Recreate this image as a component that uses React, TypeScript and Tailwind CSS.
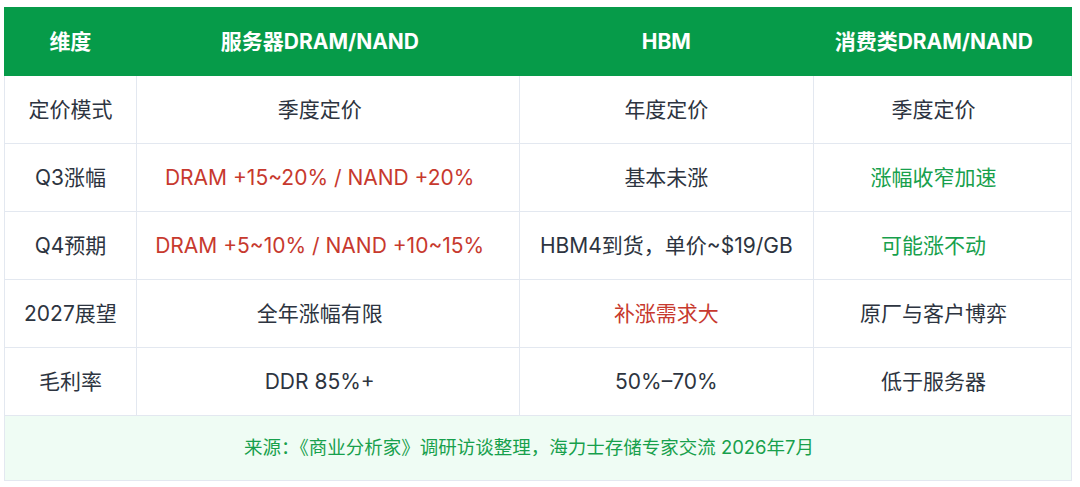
import React from "react";

const RED = "text-[#c7392e]";
const GREEN = "text-[#17a04c]";
const DARK = "text-[#2d3440]";

type Cell = { t: string; c?: string };

const rows: Cell[][] = [
  [{ t: "定价模式" }, { t: "季度定价" }, { t: "年度定价" }, { t: "季度定价" }],
  [
    { t: "Q3涨幅" },
    { t: "DRAM +15~20% / NAND +20%", c: RED },
    { t: "基本未涨" },
    { t: "涨幅收窄加速", c: GREEN },
  ],
  [
    { t: "Q4预期" },
    { t: "DRAM +5~10% / NAND +10~15%", c: RED },
    { t: "HBM4到货，单价~$19/GB" },
    { t: "可能涨不动", c: GREEN },
  ],
  [{ t: "2027展望" }, { t: "全年涨幅有限" }, { t: "补涨需求大", c: RED }, { t: "原厂与客户博弈" }],
  [{ t: "毛利率" }, { t: "DDR 85%+" }, { t: "50%–70%" }, { t: "低于服务器" }],
];

const colCls = [
  "w-[132px] border-r",
  "w-[383px] border-r pr-[16px]",
  "w-[295px] border-r",
  "w-[257px] pr-[18px]",
];

export default function App() {
  return (
    <div
      className="w-[1080px] h-[487px] bg-white pt-[7px] pl-[4px]"
      style={{ fontFamily: '"Inter", "Noto Sans CJK SC", sans-serif' }}
    >
      <div className="w-[1068px] border border-[#e3e8f0] border-t-0">
        <div className="flex h-[69px] bg-[#069b49] text-white font-bold text-[21px] -mx-px">
          {["维度", "服务器DRAM/NAND", "HBM", "消费类DRAM/NAND"].map((h, i) => (
            <div
              key={i}
              className={`flex items-center justify-center ${
                ["w-[133px]", "w-[383px] pr-[16px]", "w-[295px]", "w-[259px] pr-[18px]"][i]
              }`}
            >
              {h}
            </div>
          ))}
        </div>
        {rows.map((r, ri) => (
          <div key={ri} className="flex h-[68px] border-b border-[#e3e8f0]">
            {r.map((c, ci) => (
              <div
                key={ci}
                className={`flex items-center justify-center border-[#e3e8f0] text-[21px] ${colCls[ci]} ${
                  c.c ?? DARK
                }`}
              >
                {c.t}
              </div>
            ))}
          </div>
        ))}
        <div
          className={`flex h-[64px] items-center justify-center bg-[#effcf4] text-[18.5px] pr-[18px] ${GREEN}`}
        >
          来源：《商业分析家》调研访谈整理，海力士存储专家交流 2026年7月
        </div>
      </div>
    </div>
  );
}
